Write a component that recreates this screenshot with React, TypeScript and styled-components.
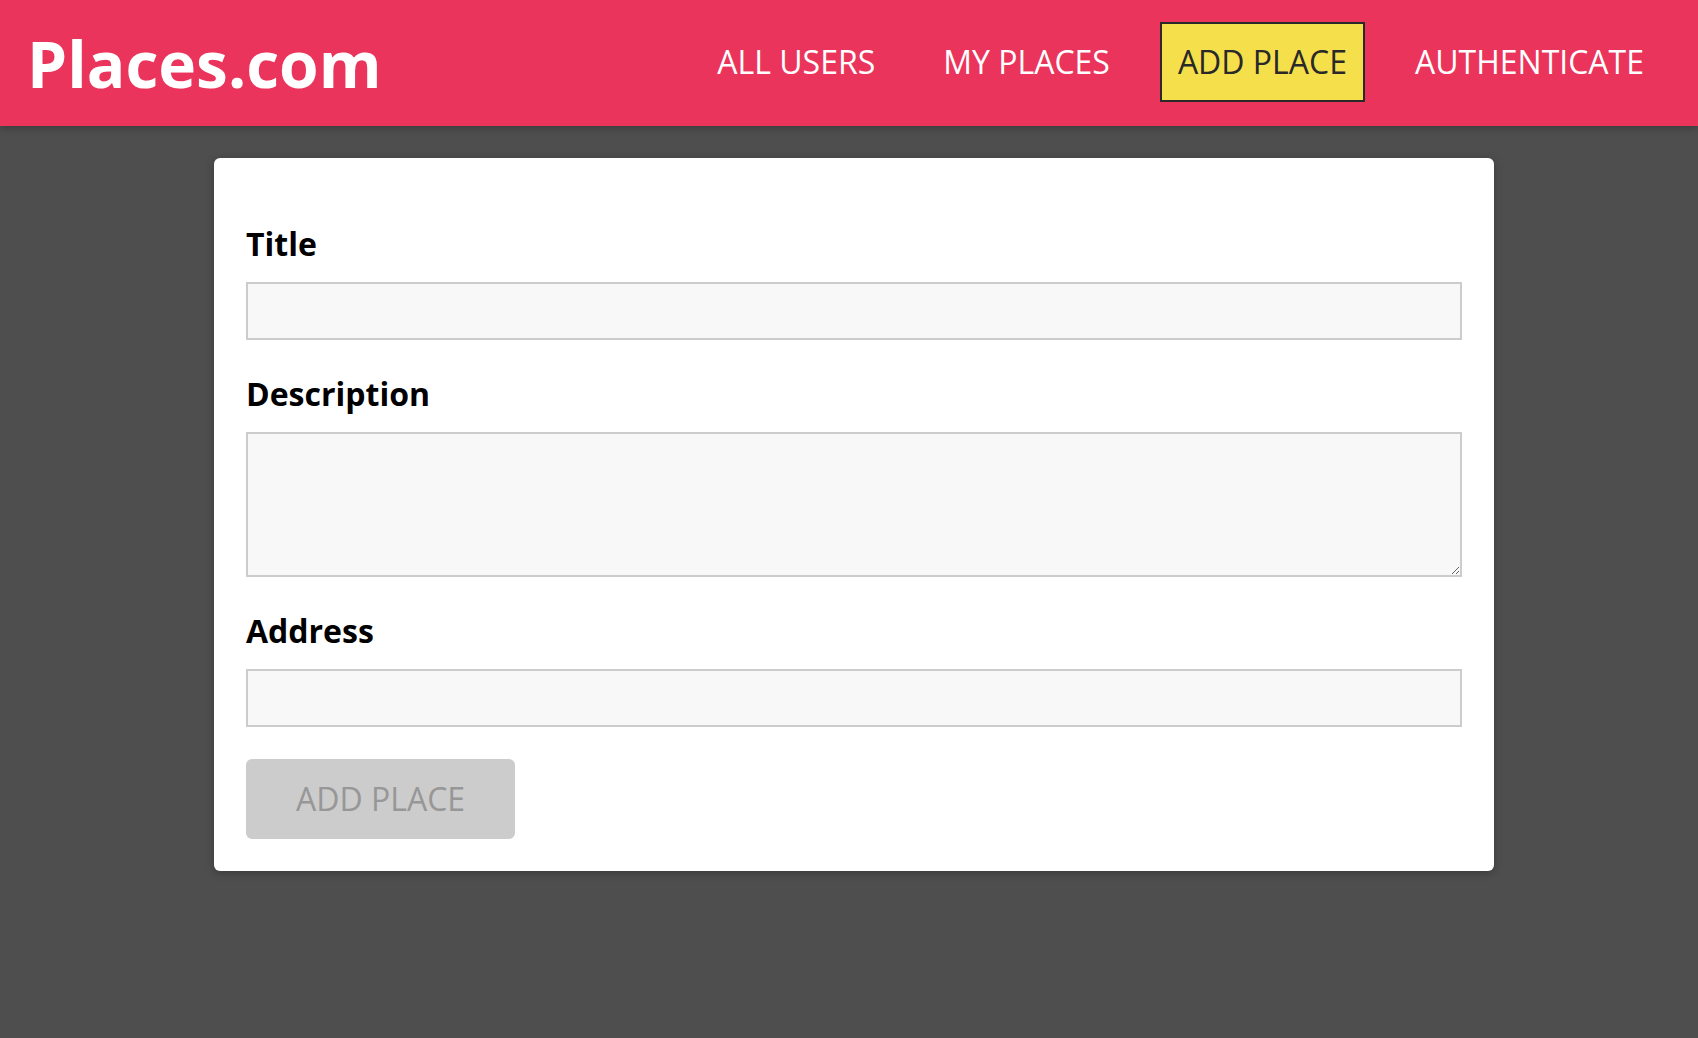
import React from "react";
import styled, { createGlobalStyle } from "styled-components";

const GlobalStyle = createGlobalStyle`
  html, body {
    margin: 0;
    padding: 0;
    background: #4e4e4e;
    font-family: "Open Sans", "Noto Sans", sans-serif;
  }
  * { box-sizing: border-box; }
`;

const Header = styled.header`
  height: 126px;
  background: #ea345b;
  box-shadow: 0 2px 8px rgba(0, 0, 0, 0.26);
  display: flex;
  align-items: center;
  justify-content: space-between;
  padding: 0 36px 0 27px;
  position: relative;
  z-index: 2;
`;

const Logo = styled.h1`
  margin: 0;
  color: #fff;
  font-size: 64px;
  font-weight: 700;
  line-height: normal;
`;

const NavList = styled.ul`
  list-style: none;
  margin: 0;
  padding: 0;
  display: flex;
  align-items: center;
  gap: 32px;
`;

const NavLink = styled.a<{ $active?: boolean }>`
  display: block;
  padding: 16px;
  border: 2px solid ${(p) => (p.$active ? "#292929" : "transparent")};
  background: ${(p) => (p.$active ? "#f5df4b" : "transparent")};
  color: ${(p) => (p.$active ? "#292929" : "#fff")};
  font-size: 32px;
  line-height: 44px;
  text-decoration: none;
  margin-top: -3px;
`;

const Main = styled.main`
  padding: 32px 0 32px 10px;
`;

const Card = styled.form`
  width: 1280px;
  margin: 0 auto;
  background: #fff;
  border-radius: 6px;
  box-shadow: 0 2px 8px rgba(0, 0, 0, 0.26);
  padding: 32px;
  display: flex;
  flex-direction: column;
`;

const Field = styled.div`
  margin: 32px 0;
  display: flex;
  flex-direction: column;
  & + & { margin-top: 0; }
`;

const Label = styled.label`
  font-size: 32px;
  font-weight: 700;
  line-height: 44px;
  color: #000;
  margin-bottom: 16px;
  display: block;
`;

const TextInput = styled.input`
  width: 100%;
  height: 58px;
  font: inherit;
  font-size: 32px;
  border: 2px solid #ccc;
  background: #f8f8f8;
  padding: 4px 8px;
  outline: none;
`;

const TextArea = styled.textarea`
  width: 100%;
  height: 145px;
  font: inherit;
  font-size: 32px;
  border: 2px solid #ccc;
  background: #f8f8f8;
  padding: 4px 8px;
  outline: none;
  resize: both;
  display: block;
`;

const Submit = styled.button`
  align-self: flex-start;
  font-family: inherit;
  font-size: 32px;
  line-height: 44px;
  padding: 16px 48px;
  border: 2px solid #ccc;
  border-radius: 6px;
  background: #ccc;
  color: #979797;
  cursor: not-allowed;
`;

export default function App() {
  return (
    <>
      <GlobalStyle />
      <Header>
        <Logo>Places.com</Logo>
        <nav>
          <NavList>
            <li><NavLink href="#">ALL USERS</NavLink></li>
            <li><NavLink href="#">MY PLACES</NavLink></li>
            <li><NavLink href="#" $active>ADD PLACE</NavLink></li>
            <li><NavLink href="#">AUTHENTICATE</NavLink></li>
          </NavList>
        </nav>
      </Header>
      <Main>
        <Card onSubmit={(e) => e.preventDefault()}>
          <Field>
            <Label htmlFor="title">Title</Label>
            <TextInput id="title" type="text" />
          </Field>
          <Field>
            <Label htmlFor="description">Description</Label>
            <TextArea id="description" rows={3} />
          </Field>
          <Field>
            <Label htmlFor="address">Address</Label>
            <TextInput id="address" type="text" />
          </Field>
          <Submit type="submit" disabled>ADD PLACE</Submit>
        </Card>
      </Main>
    </>
  );
}
